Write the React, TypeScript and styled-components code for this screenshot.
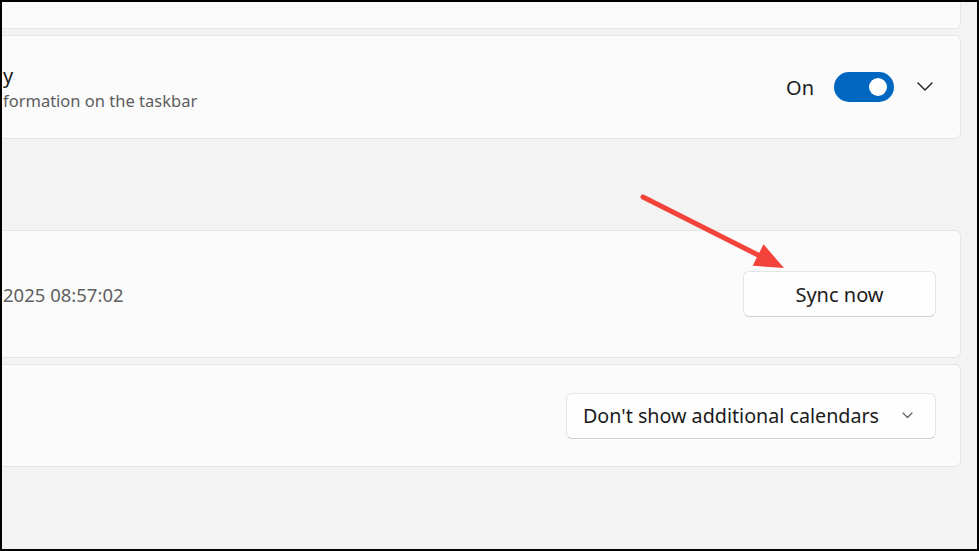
import React from 'react';
import styled, { createGlobalStyle } from 'styled-components';

const GlobalStyle = createGlobalStyle`
  html, body {
    margin: 0;
    padding: 0;
    background: #000;
  }
  * {
    box-sizing: border-box;
  }
`;

const Frame = styled.div`
  position: relative;
  width: 979px;
  height: 551px;
  border: 2px solid #000;
  background: #f3f3f3;
  overflow: hidden;
  font-family: 'Noto Sans', 'Open Sans', sans-serif;
  color: #1b1b1b;
`;

const Column = styled.div`
  display: flex;
  flex-direction: column;
  margin: -10px 16px 0 -10px;
`;

const Card = styled.div<{ $height: number; $gapAfter?: number; $padRight?: number }>`
  display: flex;
  align-items: center;
  justify-content: space-between;
  height: ${(p) => p.$height}px;
  margin-bottom: ${(p) => p.$gapAfter ?? 6}px;
  padding: 0 ${(p) => p.$padRight ?? 24}px 0 10px;
  background: #fbfbfb;
  border: 1px solid #e5e5e5;
  border-radius: 6px;
`;

const TextBlock = styled.div`
  display: flex;
  flex-direction: column;
  gap: 1px;
`;

const Title = styled.div`
  font-size: 20px;
  line-height: 26px;
  color: #1b1b1b;
`;

const Subtitle = styled.div`
  font-size: 16.5px;
  line-height: 22px;
  color: #5d5d5d;
`;

const Value = styled.div`
  font-size: 18.5px;
  color: #616161;
`;

const Controls = styled.div`
  display: flex;
  align-items: center;
`;

const StateLabel = styled.span`
  font-size: 20px;
  margin-right: 20px;
`;

const Toggle = styled.div<{ $on: boolean }>`
  position: relative;
  width: 60px;
  height: 30px;
  border-radius: 15px;
  background: ${(p) => (p.$on ? '#0067c0' : 'transparent')};

  &::after {
    content: '';
    position: absolute;
    top: 6px;
    left: ${(p) => (p.$on ? '35px' : '6px')};
    width: 18px;
    height: 18px;
    border-radius: 50%;
    background: #fff;
  }
`;

const ExpandButton = styled.div`
  display: flex;
  align-items: center;
  justify-content: center;
  width: 32px;
  height: 32px;
  margin-left: 15px;
`;

const Button = styled.button<{ $width: number }>`
  display: flex;
  align-items: center;
  justify-content: center;
  width: ${(p) => p.$width}px;
  height: 46px;
  padding: 0 16px;
  font-family: inherit;
  font-size: 20px;
  color: #1b1b1b;
  background: #fefefe;
  border: 1px solid #e5e5e5;
  border-bottom-color: #cfcfcf;
  border-radius: 6px;
`;

const Select = styled(Button)`
  justify-content: space-between;
  padding: 0 22px 0 16px;
  font-size: 19.7px;
`;

const ArrowOverlay = styled.svg`
  position: absolute;
  left: -2px;
  top: -2px;
  pointer-events: none;
`;

const Chevron: React.FC<{ size: number; stroke: number; color: string }> = ({ size, stroke, color }) => (
  <svg width={size} height={size / 2 + 2} viewBox={`0 0 ${size} ${size / 2 + 2}`} fill="none">
    <path
      d={`M1 1 L${size / 2} ${size / 2} L${size - 1} 1`}
      stroke={color}
      strokeWidth={stroke}
      strokeLinecap="round"
      strokeLinejoin="round"
    />
  </svg>
);

export default function App() {
  return (
    <>
      <GlobalStyle />
      <Frame>
        <Column>
          <Card $height={37} />
          <Card $height={104} $gapAfter={91} $padRight={19}>
            <TextBlock>
              <Title>y</Title>
              <Subtitle>formation on the taskbar</Subtitle>
            </TextBlock>
            <Controls>
              <StateLabel>On</StateLabel>
              <Toggle $on />
              <ExpandButton>
                <Chevron size={16} stroke={1.4} color="#1b1b1b" />
              </ExpandButton>
            </Controls>
          </Card>
          <Card $height={128} $gapAfter={6}>
            <Value>2025 08:57:02</Value>
            <Button $width={193}>Sync now</Button>
          </Card>
          <Card $height={103}>
            <span />
            <Select $width={370}>
              <span>Don't show additional calendars</span>
              <Chevron size={11} stroke={1.1} color="#5b5b5b" />
            </Select>
          </Card>
        </Column>
        <ArrowOverlay width={979} height={551} viewBox="0 0 979 551">
          <line x1={643} y1={197} x2={762} y2={257} stroke="#f4433a" strokeWidth={5} strokeLinecap="round" />
          <polygon points="784,268 763.5,244.3 752.7,265.7" fill="#f4433a" />
        </ArrowOverlay>
      </Frame>
    </>
  );
}
